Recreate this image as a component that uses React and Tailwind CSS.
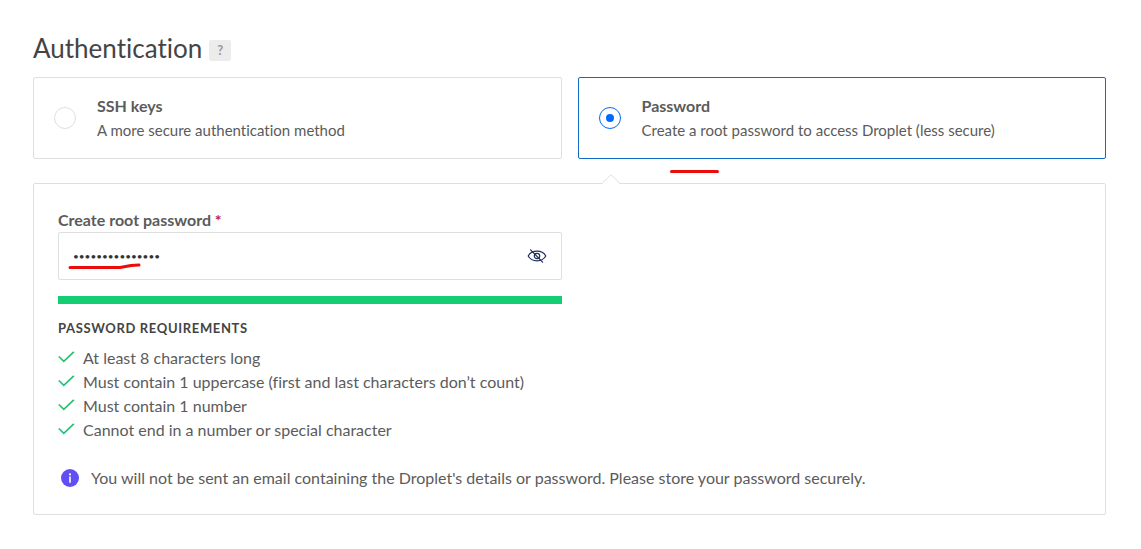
import { useState } from 'react';

const methods = [
    { id: 'ssh', title: 'SSH keys', text: 'A more secure authentication method' },
    { id: 'password', title: 'Password', text: 'Create a root password to access Droplet (less secure)' },
];

const requirements = [
    'At least 8 characters long',
    'Must contain 1 uppercase (first and last characters don’t count)',
    'Must contain 1 number',
    'Cannot end in a number or special character',
];

const EyeOffIcon = () => (
    <svg width="20" height="16" viewBox="0 0 20 16" fill="none" stroke="#1f2f5c" strokeWidth="1.2" strokeLinecap="round">
        <path d="M1.2 8C3 4.9 6.2 3.2 10 3.2S17 4.9 18.8 8C17 11.1 13.8 12.8 10 12.8S3 11.1 1.2 8Z" />
        <circle cx="10" cy="8" r="2.7" />
        <path d="M3.6 1.8L15.6 14.2" />
    </svg>
);

const CheckIcon = () => (
    <svg width="17" height="14" viewBox="0 0 17 14" fill="none" stroke="#1fc472" strokeWidth="1.7" className="shrink-0">
        <path d="M0.8 5.5L5.8 10.3L15.8 0.9" />
    </svg>
);

const InfoIcon = () => (
    <svg width="18" height="18" viewBox="0 0 18 18" className="shrink-0">
        <circle cx="9" cy="9" r="9" fill="#604ff3" />
        <circle cx="9" cy="5.3" r="1.1" fill="#fff" />
        <path d="M9 7.6V13.8" stroke="#fff" strokeWidth="1.6" />
    </svg>
);

const MethodCard = ({ method, checked, onSelect }) => (
    <label
        className={`flex items-center rounded-xs border px-5 py-4 cursor-pointer ${
            checked ? 'border-[#0f6ac4]' : 'border-[#dfdfdf]'
        }`}
    >
        <input
            type="radio"
            name="auth"
            value={method.id}
            checked={checked}
            onChange={onSelect}
            className="peer sr-only"
        />
        <span
            className={`flex size-[22px] shrink-0 items-center justify-center rounded-full border ${
                checked ? 'border-[#0069ff]' : 'border-[#dfdfdf]'
            }`}
        >
            {checked && <span className="size-2 rounded-full bg-[#0069ff]" />}
        </span>
        <span className="ml-[21px] flex flex-col">
            <span className="text-[16px] leading-6 font-bold">{method.title}</span>
            <span className="text-[15px] leading-6">{method.text}</span>
        </span>
    </label>
);

const App = () => {
    const [method, setMethod] = useState('password');
    const [password, setPassword] = useState('Droplet4Servers');
    const [visible, setVisible] = useState(false);

    return (
        <main className="bg-white pt-8 pr-[35px] pb-8 pl-[33px] font-['Lato',sans-serif] text-[16px] leading-6 text-[#5b5b5b] [font-variant-ligatures:none]">
            <div className="flex items-center gap-[7px]">
                <h1 className="text-[26px] leading-8 text-[#444]">Authentication</h1>
                <button
                    type="button"
                    aria-label="Help"
                    className="mt-1 flex h-[21px] w-[22px] items-center justify-center rounded-xs bg-[#ececec] text-[13px] font-bold text-[#999]"
                >
                    ?
                </button>
            </div>

            <div className="mt-[13px] grid grid-cols-2 gap-4">
                {methods.map((m) => (
                    <MethodCard key={m.id} method={m} checked={method === m.id} onSelect={() => setMethod(m.id)} />
                ))}
            </div>

            <section className="relative mt-6 rounded-xs border border-[#dfdfdf] p-6">
                {/* Pointer towards the selected method */}
                <svg width="20" height="10" viewBox="0 0 20 10" className="absolute -top-[10px] left-[53%] ml-[-1px]">
                    <path d="M1 10L10 1L19 10Z" fill="#fff" />
                    <path d="M1 9.5L10 0.7L19 9.5" fill="none" stroke="#dfdfdf" />
                </svg>
                <svg width="50" height="4" viewBox="0 0 50 4" className="absolute -top-[14px] left-[636px]">
                    <path d="M1.5 1.5H47.5" stroke="#ec0c0c" strokeWidth="3" strokeLinecap="round" />
                </svg>

                <div className="grid grid-cols-2 gap-4">
                    <div>
                        <label htmlFor="root-password" className="block font-bold">
                            Create root password <span className="text-[#c0203a]">*</span>
                        </label>
                        <div className="relative flex h-12 items-center rounded-xs border border-[#dfdfdf] px-[14px]">
                            <input
                                id="root-password"
                                type={visible ? 'text' : 'password'}
                                value={password}
                                onChange={(e) => setPassword(e.target.value)}
                                className={`min-w-0 flex-1 text-[#333] outline-none ${visible ? 'text-[16px]' : 'text-[10px]'}`}
                            />
                            <button type="button" aria-label="Show password" onClick={() => setVisible(!visible)}>
                                <EyeOffIcon />
                            </button>
                            <svg width="76" height="8" viewBox="0 0 76 8" className="pointer-events-none absolute top-[30px] left-2" fill="none">
                                <path d="M3 4.5H53L64 2.5L72 2" stroke="#ec0c0c" strokeWidth="3" strokeLinecap="round" strokeLinejoin="round" />
                            </svg>
                        </div>
                        <div className="mt-4 h-2 bg-[#15cd72]" />
                    </div>
                </div>

                <h2 className="mt-3 text-[13px] leading-6 font-bold tracking-wider text-[#444] uppercase">Password requirements</h2>
                <ul className="mt-[6px]">
                    {requirements.map((r) => (
                        <li key={r} className="flex items-center gap-2">
                            <CheckIcon />
                            {r}
                        </li>
                    ))}
                </ul>

                <p className="mt-6 flex items-center gap-3 pl-[3px]">
                    <InfoIcon />
                    You will not be sent an email containing the Droplet's details or password. Please store your password securely.
                </p>
            </section>
        </main>
    );
};

export default App;
